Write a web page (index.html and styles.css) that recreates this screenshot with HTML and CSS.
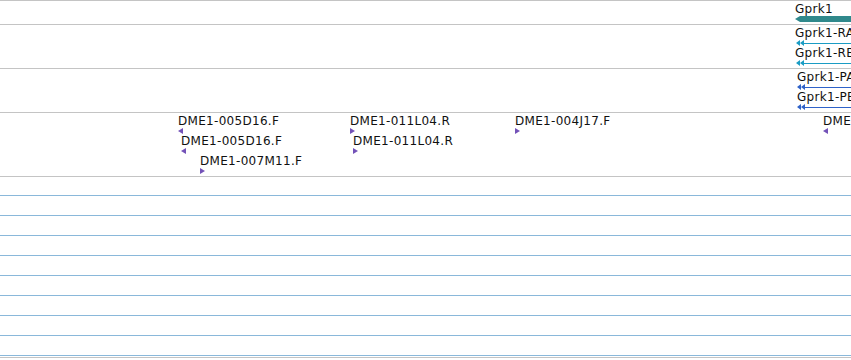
FILE: index.html
```html
<!DOCTYPE html>
<html>
<head>
  <title>Gprk1 region</title>
  <link rel="stylesheet" href="styles.css">
</head>
<body>
  <div class="panel">

    <!-- gene -->
    <div class="track track-gene">
      <div class="feature" style="left: 795px; top: 1px;">
        <span class="label">Gprk1</span>
        <svg class="glyph" width="57" height="6" viewBox="0 0 57 6">
          <path d="M0 3 L5 0 H57 V6 H5 Z" fill="#30898c"/>
        </svg>
      </div>
    </div>

    <!-- transcripts -->
    <div class="track track-tx">
      <div class="feature" style="left: 795px; top: 1px;">
        <span class="label">Gprk1-RA</span>
        <svg class="glyph" width="60" height="6" viewBox="0 0 60 6">
          <path d="M1 3 L5 0 V6 Z M5 3 L9 0 V6 Z" fill="#1a9cc4"/>
          <line x1="8" y1="3.5" x2="60" y2="3.5" stroke="#1a9cc4" stroke-width="1"/>
        </svg>
      </div>
      <div class="feature" style="left: 795px; top: 21px;">
        <span class="label">Gprk1-RB</span>
        <svg class="glyph" width="60" height="6" viewBox="0 0 60 6">
          <path d="M1 3 L5 0 V6 Z M5 3 L9 0 V6 Z" fill="#1a9cc4"/>
          <line x1="8" y1="3.5" x2="60" y2="3.5" stroke="#1a9cc4" stroke-width="1"/>
        </svg>
      </div>
    </div>

    <!-- proteins -->
    <div class="track track-tx">
      <div class="feature" style="left: 797px; top: 1px;">
        <span class="label">Gprk1-PA</span>
        <svg class="glyph" width="60" height="6" viewBox="0 0 60 6">
          <path d="M0 3 L4 0 V6 Z M4 3 L8 0 V6 Z" fill="#2f62c8"/>
          <line x1="7" y1="3.5" x2="60" y2="3.5" stroke="#2f62c8" stroke-width="1"/>
        </svg>
      </div>
      <div class="feature" style="left: 797px; top: 21px;">
        <span class="label">Gprk1-PB</span>
        <svg class="glyph" width="60" height="6" viewBox="0 0 60 6">
          <path d="M0 3 L4 0 V6 Z M4 3 L8 0 V6 Z" fill="#2f62c8"/>
          <line x1="7" y1="3.5" x2="60" y2="3.5" stroke="#2f62c8" stroke-width="1"/>
        </svg>
      </div>
    </div>

    <!-- ESTs -->
    <div class="track track-est">
      <div class="feature" style="left: 178px; top: 1px;">
        <span class="label">DME1-005D16.F</span>
        <svg class="glyph" width="5" height="6" viewBox="0 0 5 6"><path d="M0 3 L5 0 V6 Z" class="est"/></svg>
      </div>
      <div class="feature" style="left: 181px; top: 21px;">
        <span class="label">DME1-005D16.F</span>
        <svg class="glyph" width="5" height="6" viewBox="0 0 5 6"><path d="M0 3 L5 0 V6 Z" class="est"/></svg>
      </div>
      <div class="feature" style="left: 200px; top: 41px;">
        <span class="label">DME1-007M11.F</span>
        <svg class="glyph" width="5" height="6" viewBox="0 0 5 6"><path d="M0 0 L5 3 L0 6 Z" class="est"/></svg>
      </div>
      <div class="feature" style="left: 350px; top: 1px;">
        <span class="label">DME1-011L04.R</span>
        <svg class="glyph" width="5" height="6" viewBox="0 0 5 6"><path d="M0 0 L5 3 L0 6 Z" class="est"/></svg>
      </div>
      <div class="feature" style="left: 353px; top: 21px;">
        <span class="label">DME1-011L04.R</span>
        <svg class="glyph" width="5" height="6" viewBox="0 0 5 6"><path d="M0 0 L5 3 L0 6 Z" class="est"/></svg>
      </div>
      <div class="feature" style="left: 515px; top: 1px;">
        <span class="label">DME1-004J17.F</span>
        <svg class="glyph" width="5" height="6" viewBox="0 0 5 6"><path d="M0 0 L5 3 L0 6 Z" class="est"/></svg>
      </div>
      <div class="feature" style="left: 823px; top: 1px;">
        <span class="label">DME1-004J17.R</span>
        <svg class="glyph" width="5" height="6" viewBox="0 0 5 6"><path d="M0 3 L5 0 V6 Z" class="est"/></svg>
      </div>
    </div>

    <!-- empty grid -->
    <div class="grid">
      <div class="row"></div>
      <div class="row"></div>
      <div class="row"></div>
      <div class="row"></div>
      <div class="row"></div>
      <div class="row"></div>
      <div class="row"></div>
      <div class="row"></div>
      <div class="row row-last"></div>
    </div>

  </div>
</body>
</html>
```

FILE: styles.css
```css
body {
  margin: 0;
  background-color: #fff;
  font-family: "DejaVu Sans", sans-serif;
  overflow: hidden;
}

.panel {
  width: 851px;
  overflow: hidden;
}

.track {
  position: relative;
  border-top: 1px solid #c4c4c4;
  overflow: hidden;
}

.track-gene {
  height: 23px;
}

.track-tx {
  height: 43px;
}

.track-est {
  height: 63px;
}

.feature {
  position: absolute;
  display: flex;
  flex-direction: column;
  align-items: flex-start;
  white-space: nowrap;
}

.label {
  font-size: 12px;
  line-height: 14px;
  letter-spacing: 0.3px;
  color: #111;
}

.glyph {
  display: block;
}

.est {
  fill: #7352b8;
}

.grid {
  border-top: 1px solid #c4c4c4;
  padding-top: 18px;
}

.row {
  height: 19px;
  border-top: 1px solid #8ab8da;
}

.row-last {
  height: 1px;
  border-bottom: 1px solid #c4c4c4;
}
```
